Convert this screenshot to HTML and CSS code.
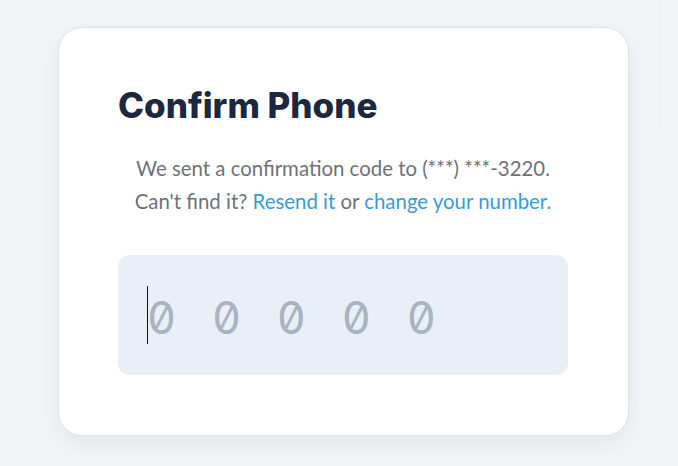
FILE: index.html
```html
<!DOCTYPE html>
<html>
<head>
<meta charset="utf-8">
<link rel="stylesheet" href="styles.css">
</head>
<body>
<div class="page">
  <div class="card">
    <h1 class="title">Confirm Phone</h1>
    <p class="desc">We sent a confirmation code to (***) ***-3220.<br>Can't find it? <a class="link" href="#">Resend it</a> or <a class="link" href="#">change your number.</a></p>
    <div class="code-input">
      <span class="caret"></span><span class="placeholder">00000</span>
    </div>
  </div>
  <div class="edge"></div>
</div>
</body>
</html>
```
FILE: styles.css
```css
html, body {
  margin: 0;
  padding: 0;
}
body {
  background: #f3f4f5;
  width: 678px;
  height: 466px;
  overflow: hidden;
  font-family: "Lato", "Liberation Sans", sans-serif;
}
.page {
  display: flex;
  padding: 27px 0 0 58px;
  gap: 31px;
}
.card {
  box-sizing: border-box;
  width: 571px;
  height: 409px;
  background: #ffffff;
  border: 1px solid #d9e3ee;
  border-radius: 24px;
  box-shadow: 0 8px 24px rgba(120, 130, 190, 0.12);
  padding: 56px 60px 0 59px;
}
.title {
  margin: 0;
  font-family: "Inter", sans-serif;
  font-weight: 800;
  font-size: 35px;
  line-height: 42px;
  letter-spacing: 0;
  color: #1d2740;
}
.desc {
  margin: 26px 0 0 0;
  text-align: center;
  font-size: 20.4px;
  line-height: 33px;
  color: #6e7278;
}
.link {
  color: #3a9ad9;
  text-decoration: none;
}
.code-input {
  margin-top: 37px;
  height: 120px;
  border-radius: 12px;
  background: #e9eff6;
  display: flex;
  align-items: center;
  padding-left: 29px;
}
.caret {
  width: 1px;
  height: 58px;
  background: #111;
}
.placeholder {
  font-family: "Inter", sans-serif;
  font-feature-settings: "zero" 1, "tnum" 1;
  font-size: 45px;
  letter-spacing: 35.75px;
  color: #a9b3c1;
  margin-left: -1px;
  padding-top: 4px;
}
.edge {
  width: 1px;
  height: 130px;
  margin-top: -27px;
  background: #eceeef;
}
```
